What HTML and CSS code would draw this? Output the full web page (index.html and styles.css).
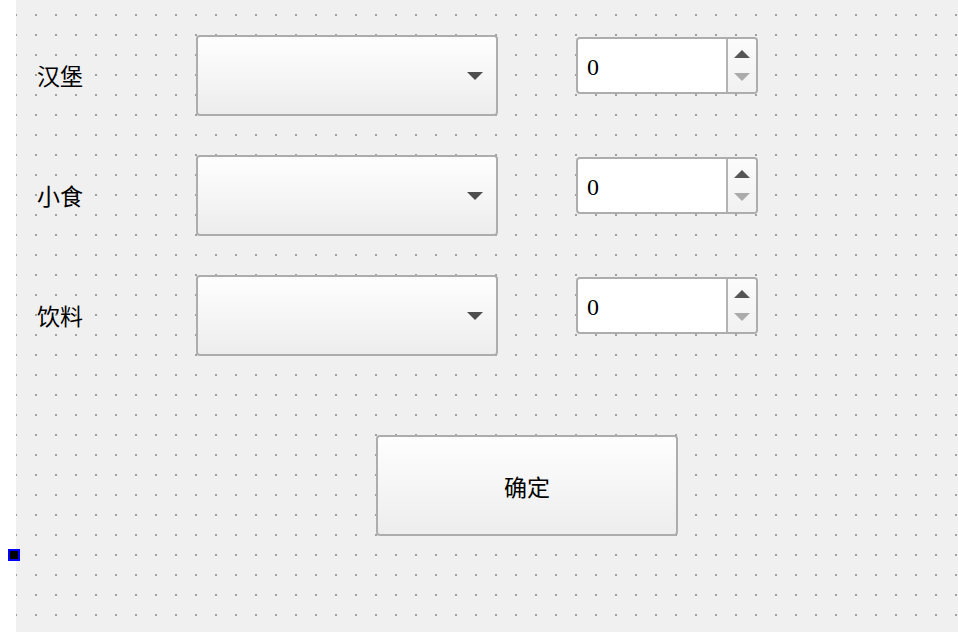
FILE: index.html
```html
<!DOCTYPE html>
<html lang="zh">
<head>
<meta charset="utf-8">
<title>点餐</title>
<link rel="stylesheet" href="styles.css">
</head>
<body>
  <div class="strip"></div>
  <div class="canvas">
    <div class="form">
      <div class="label">汉堡</div>
      <div class="combo">
        <svg class="combo-arrow" width="16" height="8" viewBox="0 0 16 8"><path d="M0 0H16L8 8Z" fill="#4f4f4f"/></svg>
      </div>
      <div class="gapcell"></div>
      <div class="spin">
        <span class="value">0</span>
        <div class="spin-btns">
          <svg width="16" height="8" viewBox="0 0 16 8"><path d="M8 0L16 8H0Z" fill="#555"/></svg>
          <svg width="16" height="8" viewBox="0 0 16 8"><path d="M0 0H16L8 8Z" fill="#ababab"/></svg>
        </div>
      </div>

      <div class="label">小食</div>
      <div class="combo">
        <svg class="combo-arrow" width="16" height="8" viewBox="0 0 16 8"><path d="M0 0H16L8 8Z" fill="#4f4f4f"/></svg>
      </div>
      <div class="gapcell"></div>
      <div class="spin">
        <span class="value">0</span>
        <div class="spin-btns">
          <svg width="16" height="8" viewBox="0 0 16 8"><path d="M8 0L16 8H0Z" fill="#555"/></svg>
          <svg width="16" height="8" viewBox="0 0 16 8"><path d="M0 0H16L8 8Z" fill="#ababab"/></svg>
        </div>
      </div>

      <div class="label">饮料</div>
      <div class="combo">
        <svg class="combo-arrow" width="16" height="8" viewBox="0 0 16 8"><path d="M0 0H16L8 8Z" fill="#4f4f4f"/></svg>
      </div>
      <div class="gapcell"></div>
      <div class="spin">
        <span class="value">0</span>
        <div class="spin-btns">
          <svg width="16" height="8" viewBox="0 0 16 8"><path d="M8 0L16 8H0Z" fill="#555"/></svg>
          <svg width="16" height="8" viewBox="0 0 16 8"><path d="M0 0H16L8 8Z" fill="#ababab"/></svg>
        </div>
      </div>
    </div>
    <button class="ok">确定</button>
  </div>
  <div class="handle"></div>
</body>
</html>
```
FILE: styles.css
```css
html, body {
  margin: 0;
  padding: 0;
  height: 100%;
}
body {
  display: flex;
  position: relative;
  overflow: hidden;
  background-color: #f0f0f0;
  background-image: conic-gradient(at 2px 2px, transparent 75%, #a0a0a0 75%);
  background-size: 20px 20px;
  background-position: 15px 14px;
  font-family: "Noto Sans CJK SC", "Liberation Sans", sans-serif;
  color: #000;
}
.strip {
  width: 16px;
  flex: none;
  background: #fff;
}
.canvas {
  flex: 1;
  padding-top: 35px;
}
.form {
  display: grid;
  grid-template-columns: 180px 302px 78px 182px;
  grid-auto-rows: 81px;
  row-gap: 39px;
}
.label {
  padding-left: 21px;
  font-size: 23px;
  line-height: 1;
  align-self: center;
  margin-top: 0;
}
.combo {
  box-sizing: border-box;
  border: 2px solid #adadad;
  border-radius: 4px;
  background: linear-gradient(#fefefe, #ededed);
  display: flex;
  justify-content: flex-end;
  align-items: center;
  padding-right: 13px;
}
.combo-arrow {
  display: block;
}
.spin {
  box-sizing: border-box;
  height: 57px;
  margin-top: 2px;
  border: 2px solid #adadad;
  border-radius: 4px;
  background: #fff;
  display: flex;
}
.value {
  flex: 1;
  padding-left: 9px;
  padding-top: 4px;
  font-family: "Liberation Serif", serif;
  font-size: 24px;
  display: flex;
  align-items: center;
}
.spin-btns {
  width: 28px;
  border-left: 2px solid #b4b4b4;
  background: linear-gradient(#fbfbfb, #f1f1f1);
  border-radius: 0 3px 3px 0;
  display: flex;
  flex-direction: column;
  align-items: center;
  justify-content: center;
  gap: 15px;
}
.spin-btns svg {
  display: block;
}
.ok {
  display: block;
  box-sizing: border-box;
  margin: 79px 0 0 360px;
  width: 302px;
  height: 101px;
  border: 2px solid #adadad;
  border-radius: 4px;
  background: linear-gradient(#fefefe, #ededed);
  font-family: "Noto Sans CJK SC", sans-serif;
  font-size: 23px;
  color: #000;
  padding: 0;
}
.handle {
  position: absolute;
  left: 8px;
  top: 549px;
  width: 8px;
  height: 8px;
  border: 2px solid #0000ff;
  background: #000;
}
```
